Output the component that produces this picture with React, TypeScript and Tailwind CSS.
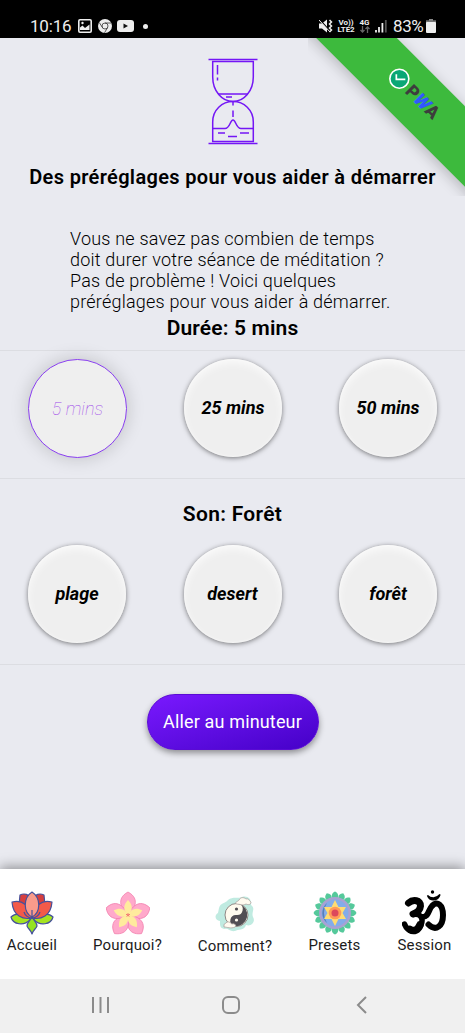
import type { ReactNode } from "react";

function StatusBar() {
  return (
    <header className="flex h-[38px] shrink-0 items-end bg-black pl-[30px] pr-[29px] text-[#eeeeee]">
      <div className="flex h-[24px] items-center">
        <span className="w-[42px] whitespace-nowrap text-[17px] leading-none tracking-[-0.2px]">10:16</span>
        <svg className="ml-[6px]" width="14" height="14" viewBox="0 0 14 14">
          <rect x="0.8" y="0.8" width="12.4" height="12.4" rx="1.2" fill="none" stroke="#eee" strokeWidth="1.6" />
          <path d="M2 11V8.5L4.5 6.5L7 9L11.5 5.5V11Z" fill="#eee" />
          <circle cx="4.5" cy="4" r="1.2" fill="#eee" />
        </svg>
        <svg className="ml-[6px]" width="14" height="14" viewBox="0 0 14 14">
          <circle cx="7" cy="7" r="7" fill="#eee" />
          <circle cx="7" cy="7" r="3" fill="none" stroke="#333" strokeWidth="0.8" />
          <path d="M7 4H13M4.4 8.5L1.3 3.5M9.6 8.5L6.5 13.8" stroke="#333" strokeWidth="0.8" />
        </svg>
        <svg className="ml-[5px]" width="17" height="12" viewBox="0 0 17 12">
          <rect width="17" height="12" rx="3" fill="#eee" />
          <path d="M6.5 3.6L11 6L6.5 8.4Z" fill="#111" />
        </svg>
        <span className="ml-[9px] size-[5px] rounded-full bg-[#eee]" />
      </div>
      <div className="ml-auto flex h-[24px] items-center">
        <svg width="14" height="14" viewBox="0 0 14 14">
          <path d="M0 4.5H3L8 0.5V13.5L3 9.5H0Z" fill="#eee" />
          <path d="M1 1L12 13" stroke="#000" strokeWidth="1.2" />
          <path d="M0 1L11 13" stroke="#eee" strokeWidth="1" />
          <path d="M10.5 1L12.5 3L10.5 5L12.5 7L10.5 9L12.5 11L10.5 13" fill="none" stroke="#eee" strokeWidth="1.5" />
        </svg>
        <div className="ml-[4px] flex w-[18px] flex-col items-center whitespace-nowrap text-[8px] font-bold leading-[7px] tracking-[-0.1px]">
          <span>Vo))</span>
          <span>LTE2</span>
        </div>
        <div className="ml-[4px] flex w-[11px] flex-col items-center text-[8px] font-bold leading-[7px]">
          <span>4G</span>
          <svg width="10" height="7" viewBox="0 0 10 7" fill="none" stroke="#666" strokeWidth="1.3">
            <path d="M2.5 0V6M0.5 4L2.5 6L4.5 4M7.5 7V1M5.5 3L7.5 1L9.5 3" />
          </svg>
        </div>
        <svg className="ml-[5px]" width="12" height="14" viewBox="0 0 12 14">
          <path d="M1 11V13.5M4 8V13.5M7.4 4V13.5" stroke="#eee" strokeWidth="1.8" />
          <path d="M10.8 1V13.5" stroke="#555" strokeWidth="1.8" />
        </svg>
        <span className="ml-[6px] w-[31px] whitespace-nowrap text-[17px] leading-none tracking-[-0.4px]">83%</span>
        <svg className="ml-[2px]" width="10" height="14" viewBox="0 0 10 14">
          <rect x="3" y="0" width="4" height="2" fill="#888" />
          <rect x="0" y="1.3" width="10" height="3" fill="#777" />
          <rect x="0" y="3" width="10" height="11" rx="1" fill="#eee" />
        </svg>
      </div>
    </header>
  );
}

function Ribbon() {
  return (
    <div className="absolute right-0 top-0 h-[158px] w-[157px] overflow-hidden">
      <div className="absolute left-[-37px] top-[26px] flex h-[57px] w-[280px] rotate-45 items-center bg-[#3dba3d] pb-[4px] pl-[111px] shadow-[0_3px_14px_rgba(0,0,0,0.22)]">
        <svg className="-rotate-45" width="22" height="22" viewBox="0 0 22 22">
          <circle cx="11" cy="11" r="9.5" fill="#0aa775" stroke="#fff" strokeWidth="1.6" />
          <path d="M8 6.5V11.7H17" fill="none" stroke="#fff" strokeWidth="1.7" />
        </svg>
        <span className="ml-[2px] text-[18px] font-black leading-none text-[#3d3d3d]">
          P<span className="inline-block -skew-x-12 text-[#3158ff]">W</span>A
        </span>
      </div>
    </div>
  );
}

function Hourglass() {
  return (
    <svg width="50" height="88" viewBox="0 0 50 88" fill="none" stroke="#7416f5" strokeWidth="1.5">
      <path d="M0.5 2.6H49.5M0.5 86.4H49.5" />
      <path d="M4.7 4.6H45.3V20C45.3 34 36 44.6 25 44.6S4.7 34 4.7 20Z" />
      <path d="M4.7 84.4H45.3V65C45.3 53 36 44.6 25 44.6S4.7 53 4.7 65Z" />
      <path d="M10 37H40M18 40H24M9.5 8V17.5M9.5 20.5V23.5M25 45V48.5M25 53.5V60" />
      <path d="M4.7 71.5H17C22 71.5 22 63 25 63S28 71.5 33 71.5H45.3" />
      <path d="M10 76H17M20 79.5H29M32 76H41" />
    </svg>
  );
}

function Choice({ children, selected = false }: { children: ReactNode; selected?: boolean }) {
  return (
    <button
      className={
        selected
          ? "size-[99px] rounded-full border border-[#8a3ff0] bg-[#efefef] pb-px text-[18px] font-thin italic text-[#a04bea] shadow-[0_0_18px_rgba(0,0,0,0.18)]"
          : "size-[98px] rounded-full bg-[#efefef] pb-[2px] text-[18px] font-bold italic text-black shadow-[0_1px_5px_rgba(0,0,0,0.5),inset_0_4px_8px_rgba(255,255,255,0.7),inset_0_0_2px_rgba(255,255,255,0.9)]"
      }
    >
      {children}
    </button>
  );
}

function Lotus() {
  return (
    <svg width="44" height="44" viewBox="0 0 44 44" stroke="#46519b" strokeWidth="1.2" strokeLinejoin="round">
      <path d="M20 28C13 22 5 22 1 26C3 34 14 35 20 29ZM24 28C31 22 39 22 43 26C41 34 30 35 24 29Z" fill="#a5e321" />
      <path d="M22 26C19 31 17 32 17 35C18 38 21 39 22 43C23 39 26 38 27 35C27 32 25 31 22 26Z" fill="#95e321" />
      <path d="M10 4C14 2 19 3 22 8L20 24L9 14ZM34 4C30 2 25 3 22 8L24 24L35 14Z" fill="#d63e3e" />
      <path d="M22 27C13 29 3 25 2 11C10 9 17 12 20 22ZM22 27C31 29 41 25 42 11C34 9 27 12 24 22Z" fill="#f35a49" />
      <path d="M22 26C13 21 13 7 22 1C31 7 31 21 22 26Z" fill="#f99b8b" />
      <path d="M22 19V28M22 27C19 27 15 25 14 21M22 27C25 27 29 25 30 21" fill="none" />
    </svg>
  );
}

function Frangipani() {
  return (
    <svg width="44" height="44" viewBox="0 0 44 44">
      {[0, 72, 144, 216, 288].map((angle) => (
        <path key={angle} transform={`rotate(${angle} 22 24)`} d="M22 24C16 19 9 8 22 1C35 8 28 19 22 24Z" fill="#ffa9cb" stroke="#f17aab" strokeWidth="0.7" />
      ))}
      {[0, 72, 144, 216, 288].map((angle) => (
        <g key={angle} transform={`rotate(${angle} 22 24)`}>
          <path d="M22 24C17 19 17 14 22 9C27 14 27 19 22 24Z" fill="#ffeb9d" />
          <path d="M22 24V22" stroke="#eb4b61" strokeWidth="0.7" />
        </g>
      ))}
    </svg>
  );
}

function YinYang() {
  return (
    <svg width="40" height="36" viewBox="0 0 40 36">
      <path d="M4 12C6 6 10 8 13 4C18 0 23 3 27 1C33 -1 37 4 36 9C41 13 36 16 38 21C41 26 36 31 31 29C29 35 23 33 20 35C15 36 13 32 10 33C4 33 5 27 5 25C0 25-1 19 3 17Z" fill="#c0ebe1" />
      <circle cx="21.5" cy="19" r="11.5" fill="#fffbee" stroke="#776b69" strokeWidth="0.8" />
      <path d="M24 7.8A11.5 11.5 0 0 1 19 30.2A5.8 5.8 0 0 1 21.5 19A5.8 5.8 0 0 0 24 7.8Z" fill="#514e53" />
      <circle cx="21.5" cy="13" r="1.6" fill="#514e53" />
      <circle cx="21.5" cy="24" r="1.6" fill="#fffbee" />
      <path d="M21 8C20 5 23 6 24 4C26 0 30 2 31 3C34 2 34 5 36 6C36 9 33 9 31 8C28 10 25 8 21 8ZM9 29C9 27 11 28 12 26C15 25 16 28 17 28C20 27 22 30 20 31C16 33 12 31 9 31Z" fill="#fffbf0" stroke="#a59998" strokeWidth="0.7" />
    </svg>
  );
}

function Mandala() {
  const petals = Array.from({ length: 16 }, (_, i) => i * 22.5);
  return (
    <svg width="44" height="44" viewBox="0 0 44 44">
      {petals.map((angle) => (
        <path key={angle} transform={`rotate(${angle} 22 22)`} d="M22 0.5C25 2 26 4.5 24.5 7.5H19.5C18 4.5 19 2 22 0.5Z" fill="#55c99b" />
      ))}
      <circle cx="22" cy="22" r="14.7" fill="#83ace9" stroke="#aaa1d2" strokeWidth="2.5" />
      <path d="M14 12A13 13 0 0 0 14 32A18 18 0 0 1 14 12Z" fill="#577dba" />
      <path d="M22 9L25.5 16H33L29.5 22L33 28H25.5L22 35L18.5 28H11L14.5 22L11 16H18.5Z" fill="#ffdc72" />
      <circle cx="22" cy="22" r="6.3" fill="#ff9a59" />
      <circle cx="22" cy="22" r="3.5" fill="#dc485c" />
    </svg>
  );
}

function Om() {
  return (
    <svg width="45" height="46" viewBox="0 0 45 46" fill="none" stroke="#000" strokeLinecap="round">
      <path d="M6.5 13C11 9 19 10 18.5 16C18 21 14 23 11 24" strokeWidth="7" />
      <path d="M11.5 24.5C18 23 22 28 19 35C15 43 6 43 2.5 34" strokeWidth="5.5" />
      <path d="M8 39.5C12 42 16 40 18 35" strokeWidth="7.5" />
      <path d="M20 27C27 27 26 20 30 16C35 10 41 15 41 25C41 36 34 42 26.5 34.5" strokeWidth="6" />
      <path d="M25.5 5.5C29 9 34 9 38 4.5C36 11 28 12 25.5 5.5Z" fill="#000" strokeWidth="1.4" />
      <circle cx="30.5" cy="2" r="1.7" fill="#000" stroke="none" />
    </svg>
  );
}

function NavItem({ label, children, className }: { label: string; children: ReactNode; className: string }) {
  return (
    <a className={`flex flex-col items-center ${className}`}>
      <span className="flex h-[46px] items-center">{children}</span>
      <span className="whitespace-nowrap text-[15px] leading-[18px] tracking-[0.2px] text-[#1c1c1c]">{label}</span>
    </a>
  );
}

export default function App() {
  return (
    <div className="flex h-[1033px] w-[465px] flex-col overflow-hidden bg-[#e9eaf0] font-['Roboto',sans-serif] text-black">
      <StatusBar />
      <main className="relative flex h-[831px] shrink-0 flex-col items-center">
        <Ribbon />
        <div className="mt-[19px] h-[88px]"><Hourglass /></div>
        <h1 className="mt-[20px] whitespace-nowrap text-[20px] font-semibold leading-[24px] tracking-[0.34px]">
          Des préréglages pour vous aider à démarrer
        </h1>
        <p className="mt-[39px] w-[325px] whitespace-nowrap text-[18px] font-[350] leading-[21px] tracking-[0.21px]">
          Vous ne savez pas combien de temps<br />
          doit durer votre séance de méditation ?<br />
          Pas de problème ! Voici quelques<br />
          préréglages pour vous aider à démarrer.
        </p>
        <h2 className="mt-[4px] text-[21px] font-semibold leading-[24px] tracking-[0.15px]">Durée: 5 mins</h2>
        <div className="mt-[10px] flex h-[129px] w-full justify-between border-y border-[#dcdde2] px-[28px] pt-[8px]">
          <Choice selected>5 mins</Choice>
          <Choice>25 mins</Choice>
          <Choice>50 mins</Choice>
        </div>
        <h2 className="mt-[23px] text-[21px] font-semibold leading-[24px] tracking-[0.3px]">Son: Forêt</h2>
        <div className="mt-[18px] flex h-[121px] w-full justify-between border-b border-[#dcdde2] px-[28px] pt-px">
          <Choice>plage</Choice>
          <Choice>desert</Choice>
          <Choice>forêt</Choice>
        </div>
        <button className="mt-[29px] h-[56px] w-[172px] rounded-full border border-[#5a0bd4] bg-linear-to-br from-[#7a18ff] to-[#4500c8] pb-px text-[18px] tracking-[0.15px] text-white shadow-[0_3px_6px_rgba(0,0,0,0.4)]">
          Aller au minuteur
        </button>
      </main>
      <nav className="relative flex h-[110px] shrink-0 items-start justify-between bg-white pl-[7px] pr-[13px] pt-[21px] shadow-[0_-2px_12px_rgba(0,0,0,0.4)]">
        <NavItem label="Accueil" className="w-[50px]"><Lotus /></NavItem>
        <NavItem label="Pourquoi?" className="w-[69px]"><Frangipani /></NavItem>
        <NavItem label="Comment?" className="w-[74px] pt-px"><YinYang /></NavItem>
        <NavItem label="Presets" className="w-[53px]"><Mandala /></NavItem>
        <NavItem label="Session" className="w-[55px]"><Om /></NavItem>
      </nav>
      <footer className="relative flex h-[54px] shrink-0 items-center justify-between bg-[#f0f0f0] pb-[2px] pl-[91px] pr-[98px]">
        <svg width="19" height="18" viewBox="0 0 19 18" stroke="#8b8b8b" strokeWidth="2"><path d="M2 1V17M9.5 1V17M17 1V17" /></svg>
        <svg className="-ml-[4px]" width="18" height="18" viewBox="0 0 18 18" fill="none" stroke="#8b8b8b" strokeWidth="2"><rect x="1" y="1" width="16" height="16" rx="5" /></svg>
        <svg width="11" height="18" viewBox="0 0 11 18" fill="none" stroke="#8b8b8b" strokeWidth="2"><path d="M10 1L2 9L10 17" /></svg>
      </footer>
    </div>
  );
}
